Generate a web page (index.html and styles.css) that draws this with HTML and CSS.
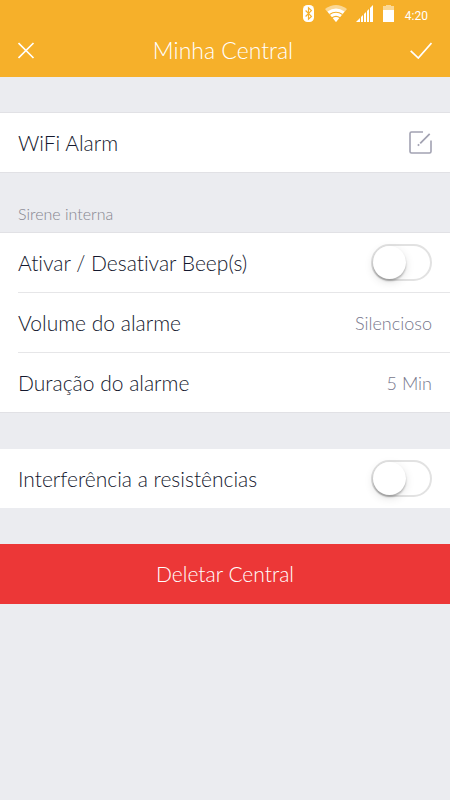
FILE: index.html
```html
<!DOCTYPE html>
<html lang="pt-BR">
<head>
    <meta charset="UTF-8">
    <meta name="viewport" content="width=device-width, initial-scale=1.0">
    <title>Minha Central</title>
    <link rel="stylesheet" href="styles.css">
</head>
<body>
    <header class="header">
        <div class="status-bar">
            <svg class="bluetooth" width="13" height="18" viewBox="0 0 13 18">
                <rect x="0" y="0" width="11" height="17" rx="4.5" fill="#fff"/>
                <path d="M2.6 5.5 L8.4 11.4 L5.5 14.2 V2.8 L8.4 5.6 L2.6 11.5" fill="none" stroke="#f6b02a" stroke-width="1.2"/>
            </svg>
            <svg class="wifi" width="22" height="18" viewBox="0 0 22 18">
                <path d="M0 4 Q11 -4 22 4 L11 17 Z" fill="#fff" opacity="0.5"/>
                <path d="M2.5 6.5 Q11 0.5 19.5 6.5 L11 17 Z" fill="#fff"/>
                <path d="M4.5 9.5 Q11 5 17.5 9.5 M7 12.8 Q11 10 15 12.8" fill="none" stroke="#f6b02a" stroke-width="1.2"/>
            </svg>
            <svg class="signal" width="18" height="18" viewBox="0 0 18 18">
                <path d="M0 17 L17 0 V17 Z" fill="#fff"/>
                <path d="M4.5 0 V17 M7.5 0 V17 M10.5 0 V17 M13.5 0 V17" stroke="#f6b02a" stroke-width="1"/>
            </svg>
            <svg class="battery" width="13" height="18" viewBox="0 0 13 18">
                <path d="M3 0 H8 V1 H11 V5 H0 V1 H3 Z" fill="#fff" opacity="0.5"/>
                <rect x="0" y="5" width="11" height="12" fill="#fff"/>
            </svg>
            <span class="clock">4:20</span>
        </div>
        <div class="nav">
            <button class="icon-button" type="button" aria-label="Fechar">
                <svg width="18" height="18" viewBox="0 0 18 18">
                    <path d="M0.5 2 L15.5 17 M15.5 2 L0.5 17" fill="none" stroke="#fff" stroke-width="1.7"/>
                </svg>
            </button>
            <h1 class="title">Minha Central</h1>
            <button class="icon-button" type="button" aria-label="Salvar">
                <svg width="22" height="18" viewBox="0 0 22 18">
                    <path d="M0.7 9.8 L8.3 17 L21.5 2" fill="none" stroke="#fff" stroke-width="1.7"/>
                </svg>
            </button>
        </div>
    </header>

    <main class="content">
        <section class="card lined">
            <div class="row">
                <span>WiFi Alarm</span>
                <button class="icon-button" type="button" aria-label="Editar nome">
                    <svg width="23" height="23" viewBox="0 0 23 23">
                        <path d="M14 1 H2.5 Q1 1 1 2.5 V20.5 Q1 22 2.5 22 H20.5 Q22 22 22 20.5 V9.5" fill="none" stroke="#a2a2b2" stroke-width="1.6"/>
                        <path d="M11.2 12.3 L20.7 2.8 M8.8 14.7 L10.2 13.3" fill="none" stroke="#a2a2b2" stroke-width="1.8"/>
                    </svg>
                </button>
            </div>
        </section>

        <h2 class="section-label">Sirene interna</h2>
        <section class="card lined">
            <div class="row">
                <label for="beep">Ativar / Desativar Beep(s)</label>
                <input class="switch" type="checkbox" id="beep">
            </div>
            <div class="row">
                <span>Volume do alarme</span>
                <span class="value">Silencioso</span>
            </div>
            <div class="row">
                <span>Duração do alarme</span>
                <span class="value">5 Min</span>
            </div>
        </section>

        <section class="card spaced">
            <div class="row">
                <label for="interferencia">Interferência a resistências</label>
                <input class="switch" type="checkbox" id="interferencia">
            </div>
        </section>

        <button class="delete-button" type="button">Deletar Central</button>
    </main>
</body>
</html>
```
FILE: styles.css
```css
* {
    box-sizing: border-box;
}
body {
    margin: 0;
    background-color: #ebecf0;
    color: #14182e;
    font-family: Lato, "Liberation Sans", sans-serif;
    font-size: 21px;
    font-weight: 300;
    line-height: 24px;
    font-variant-ligatures: none;
}
button {
    border: none;
    padding: 0;
    font: inherit;
    cursor: pointer;
}
svg {
    display: block;
}
.header {
    background-color: #f6b02a;
    color: #fff;
}
.status-bar {
    display: flex;
    justify-content: flex-end;
    align-items: flex-start;
    gap: 9px;
    height: 26px;
    padding: 5px 22px 0 18px;
}
.clock {
    font-family: Roboto, sans-serif;
    font-size: 12px;
    font-weight: 400;
    line-height: 22px;
}
.nav {
    display: flex;
    justify-content: space-between;
    align-items: center;
    height: 51px;
    padding: 0 18px 4px;
}
.title {
    margin: 0;
    font-size: 23px;
    font-weight: 300;
    line-height: 28px;
}
.icon-button {
    background: none;
}
.content {
    padding-top: 35px;
}
.card {
    background-color: #fff;
}
.lined {
    border-top: 1px solid #e1e1e5;
    border-bottom: 1px solid #e1e1e5;
}
.spaced {
    margin: 36px 0;
}
.row {
    display: flex;
    justify-content: space-between;
    align-items: center;
    box-sizing: content-box;
    height: 59px;
    margin-left: 18px;
    padding-right: 18px;
}
.row + .row {
    border-top: 1px solid #e6e6e8;
}
.value {
    color: #77778c;
    font-size: 18px;
}
.section-label {
    margin: 0;
    padding: 31px 18px 8px;
    color: #85858f;
    font-size: 16px;
    font-weight: 300;
    line-height: 20px;
}
.switch {
    appearance: none;
    display: flex;
    align-items: center;
    width: 61px;
    height: 37px;
    margin: 0;
    border: 2px solid #e2e2e2;
    border-radius: 19px;
    background-color: #fff;
    cursor: pointer;
}
.switch::before {
    content: "";
    width: 33px;
    height: 33px;
    border-radius: 50%;
    background-color: #fff;
    box-shadow: 0 2px 2px rgba(0, 0, 0, 0.25), 0 3px 10px rgba(0, 0, 0, 0.12);
}
.switch:checked {
    justify-content: flex-end;
    background-color: #f6b02a;
}
.delete-button {
    width: 100%;
    height: 60px;
    background-color: #ec3737;
    color: #fff;
}
```
